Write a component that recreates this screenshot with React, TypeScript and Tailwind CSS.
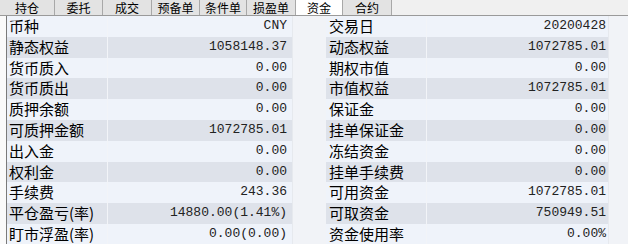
import React from "react";

const tabs = [
  { name: "持仓", w: "w-[55px]" },
  { name: "委托", w: "w-[48px]" },
  { name: "成交", w: "w-[49px]" },
  { name: "预备单", w: "w-[48px]" },
  { name: "条件单", w: "w-[47px]" },
  { name: "损盈单", w: "w-[49px]" },
  { name: "资金", w: "w-[47px]", active: true },
  { name: "合约", w: "w-[49px]" },
];

const rows: [string, string, string, string][] = [
  ["币种", "CNY", "交易日", "20200428"],
  ["静态权益", "1058148.37", "动态权益", "1072785.01"],
  ["货币质入", "0.00", "期权市值", "0.00"],
  ["货币质出", "0.00", "市值权益", "1072785.01"],
  ["质押余额", "0.00", "保证金", "0.00"],
  ["可质押金额", "1072785.01", "挂单保证金", "0.00"],
  ["出入金", "0.00", "冻结资金", "0.00"],
  ["权利金", "0.00", "挂单手续费", "0.00"],
  ["手续费", "243.36", "可用资金", "1072785.01"],
  ["平仓盈亏(率)", "14880.00(1.41%)", "可取资金", "750949.51"],
  ["盯市浮盈(率)", "0.00(0.00)", "资金使用率", "0.00%"],
];

const cjk = { fontFamily: '"Noto Sans CJK SC", "Noto Sans", sans-serif' };
const mono = { fontFamily: '"Liberation Mono", "Noto Sans CJK SC", monospace' };

function App() {
  return (
    <div className="w-[628px] h-[244px] overflow-hidden bg-[#f4f6f9] text-black">
      {/* tab bar */}
      <div className="flex h-[16px] bg-[#f0f0f0] border-b border-[#9a9a9a]" style={cjk}>
        {tabs.map((t) => (
          <div
            key={t.name}
            className={
              t.w +
              " flex items-end justify-center text-[12px] leading-[15px] border-r border-[#a8a8a8] " +
              (t.active ? "bg-white" : "bg-[#e3e3e3]")
            }
          >
            {t.name}
          </div>
        ))}
      </div>

      {/* data table */}
      <div className="flex">
        <div className="w-[6px] bg-[#fafafa]" />
        <div className="w-[1px] bg-[#7a7a7a]" />
        <div className="grid grid-cols-[101px_184px_34px_101px_181px_20px] auto-rows-[20.8px]">
          {rows.map((r, i) => {
            const bg = i % 2 === 0 ? "bg-[#eff3fa]" : "bg-[#dee2ea]";
            return (
              <React.Fragment key={r[0]}>
                <div className={bg + " pl-[2px] text-[15px] leading-[19px] border-r border-[#f2f4f8] whitespace-nowrap"} style={cjk}>
                  {r[0]}
                </div>
                <div className={bg + " pr-[5px] text-right text-[13px] leading-[20px] text-[#222]"} style={mono}>
                  {r[1]}
                </div>
                <div className="bg-[#f1f3f7] border-l border-[#e6e9ee]" />
                <div className={bg + " pl-[3px] text-[15px] leading-[19px] border-r border-[#f2f4f8] whitespace-nowrap"} style={cjk}>
                  {r[2]}
                </div>
                <div className={bg + " pr-[2px] text-right text-[13px] leading-[20px] text-[#222]"} style={mono}>
                  {r[3]}
                </div>
                <div className="bg-[#f1f3f7] border-l border-[#e6e9ee]" />
              </React.Fragment>
            );
          })}
        </div>
      </div>
    </div>
  );
}

export default App;
